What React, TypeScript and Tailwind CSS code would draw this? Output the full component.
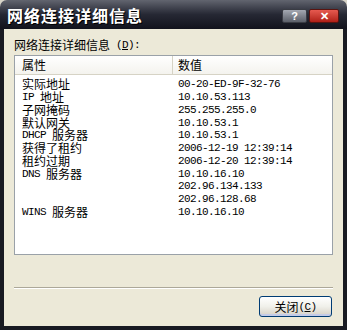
import React from "react";

const rows: [string, string][] = [
  ["实际地址", "00-20-ED-9F-32-76"],
  ["IP 地址", "10.10.53.113"],
  ["子网掩码", "255.255.255.0"],
  ["默认网关", "10.10.53.1"],
  ["DHCP 服务器", "10.10.53.1"],
  ["获得了租约", "2006-12-19 12:39:14"],
  ["租约过期", "2006-12-20 12:39:14"],
  ["DNS 服务器", "10.10.16.10"],
  ["", "202.96.134.133"],
  ["", "202.96.128.68"],
  ["WINS 服务器", "10.10.16.10"],
];

// split ascii runs from CJK so ascii gets the narrow 6px cell like SimSun
function Mixed({ text }: { text: string }) {
  const parts = text.match(/[\x00-\x7f]+|[^\x00-\x7f]+/g) || [];
  return (
    <>
      {parts.map((p, i) =>
        /^[\x00-\x7f]+$/.test(p) ? (
          <span
            key={i}
            className="inline-block h-[12px] whitespace-pre align-top font-['Liberation_Mono',monospace] text-[11px] leading-[13px] tracking-[-0.6px]"
          >
            {p}
          </span>
        ) : (
          <span
            key={i}
            className="inline-block h-[12px] align-top font-['Noto_Sans_CJK_SC',sans-serif] text-[12px] leading-[12px]"
          >
            {p}
          </span>
        )
      )}
    </>
  );
}

export default function App() {
  return (
    <div className="flex h-[330px] w-[347px] flex-col bg-[#d8d4c8]">
      <div className="flex h-[29px] shrink-0 items-center justify-between rounded-t-[7px] bg-gradient-to-b from-[#62656f] via-[#262834] to-[#12131c] pl-[7px] pr-[8px]">
        <span className="font-['Noto_Sans_CJK_SC',sans-serif] text-[16px] font-bold leading-none tracking-[1px] text-white [text-shadow:1px_1px_0_#000]">
          网络连接详细信息
        </span>
        <div className="flex gap-[2px] pt-[3px]">
          <div className="flex h-[14px] w-[25px] items-center justify-center rounded-[2px] border border-[#3a3c44] bg-gradient-to-b from-[#a4a8b2] to-[#5c606a] font-['Liberation_Sans',sans-serif] text-[11px] font-bold text-white">
            ?
          </div>
          <div className="flex h-[14px] w-[30px] items-center justify-center rounded-[2px] border border-[#5a1410] bg-gradient-to-b from-[#e65a50] to-[#b01e16] font-['Liberation_Sans',sans-serif] text-[11px] font-bold text-white">
            ✕
          </div>
        </div>
      </div>
      <div className="flex flex-1 flex-col border-x-4 border-b-4 border-[#181a22] bg-[#ece9d8] px-[10px]">
        <div className="mt-[10px] flex h-[12px] leading-[12px] text-black">
          <Mixed text="网络连接详细信息 (" />
          <span className="inline-block h-[12px] font-['Liberation_Mono',monospace] text-[11px] leading-[13px] tracking-[-0.6px] underline">D</span>
          <Mixed text="):" />
        </div>
        <div className="mt-[4px] h-[200px] border border-[#9aa1a8] bg-white">
          <div className="flex h-[19px] border-b border-[#d6d3c5] bg-gradient-to-b from-white to-[#f4f3ee] leading-[12px]">
            <div className="flex w-[158px] items-center border-r border-[#d6d3c5] pl-[7px]">
              <Mixed text="属性" />
            </div>
            <div className="flex items-center pl-[5px]">
              <Mixed text="数值" />
            </div>
          </div>
          <div className="pt-[3px]">
            {rows.map(([k, v], i) => (
              <div key={i} className="flex h-[12.75px] items-center leading-[12px] text-black">
                <div className="flex w-[158px] pl-[7px]">
                  <Mixed text={k} />
                </div>
                <div className="flex pl-[5px]">
                  <Mixed text={v} />
                </div>
              </div>
            ))}
          </div>
        </div>
        <div className="mt-[32px] border-b border-t border-b-white border-t-[#aca899]" />
        <div className="mt-[7px] flex justify-end pr-[1px]">
          <button className="flex h-[21px] w-[73px] items-center justify-center rounded-[3px] border border-[#003c74] bg-gradient-to-b from-white via-[#f0f0ea] to-[#d6d0c5] leading-[12px] text-black shadow-[inset_0_-2px_0_#c4cbe8]">
            <Mixed text="关闭(" />
            <span className="inline-block h-[12px] font-['Liberation_Mono',monospace] text-[11px] leading-[13px] tracking-[-0.6px] underline">C</span>
            <Mixed text=")" />
          </button>
        </div>
      </div>
    </div>
  );
}
